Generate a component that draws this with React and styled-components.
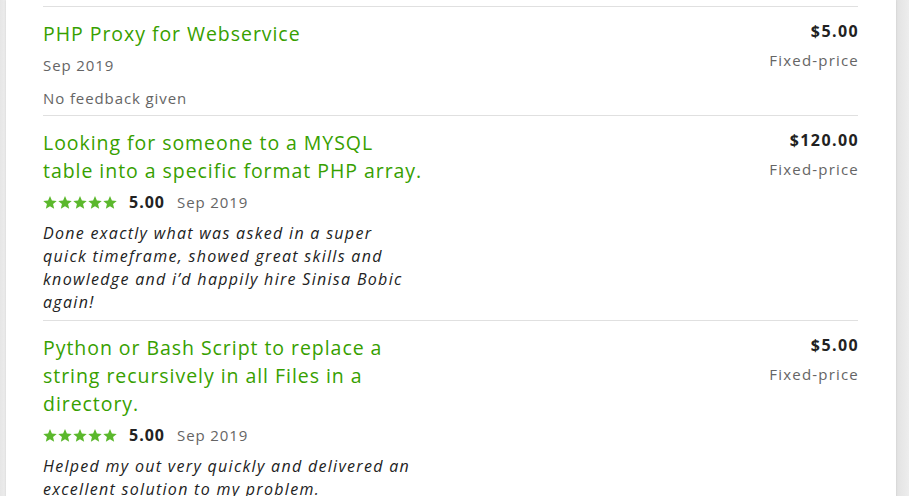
import React from 'react'
import styled, { createGlobalStyle } from 'styled-components'

const GlobalStyle = createGlobalStyle`
  html, body {
    margin: 0;
    padding: 0;
    background: #ececec;
    font-family: "Open Sans", "Liberation Sans", sans-serif;
  }
`

const Page = styled.div`
  display: flex;
  min-height: 496px;
  padding: 0 13px 0 6px;
  background: linear-gradient(90deg, #e6e6e6 0, #ededed 6px, #ededed calc(100% - 13px), #e2e2e2 calc(100% - 13px), #ededed 100%);
`

const Panel = styled.div`
  flex: 1;
  background: #fff;
  padding: 6px 38px 0 37px;
  box-shadow: 0 0 2px rgba(0, 0, 0, 0.12);
`

const Row = styled.div`
  display: flex;
  justify-content: space-between;
  border-top: 1px solid #e0e0e0;
  padding: 13px 0 6px;
`

const Left = styled.div`
  width: 420px;
`

const Title = styled.div`
  color: #37a000;
  font-size: 19.5px;
  font-weight: 500;
  line-height: 28px;
  letter-spacing: 0.95px;

  span {
    display: block;
    white-space: nowrap;
  }
`

const Meta = styled.div`
  display: flex;
  align-items: center;
  gap: 12px;
  margin-top: ${p => p.gap || 6}px;
  line-height: 22px;
  font-size: 15px;
  letter-spacing: 0.9px;
  color: #656565;
`

const Stars = styled.div`
  display: flex;
  gap: 1px;
`

const Score = styled.span`
  color: #222;
  font-weight: 700;
  font-size: 16px;
  letter-spacing: 1px;
`

const Review = styled.div`
  margin-top: 9px;
  font-size: 16px;
  font-style: italic;
  line-height: 23px;
  letter-spacing: 1.3px;
  color: #222;

  span {
    display: block;
    white-space: nowrap;
  }
`

const Right = styled.div`
  text-align: right;
`

const Price = styled.div`
  font-size: 16px;
  font-weight: 700;
  line-height: 22px;
  letter-spacing: 1.4px;
  margin-right: -1px;
  color: #222;
`

const Kind = styled.div`
  margin-top: 7px;
  font-size: 15px;
  line-height: 22px;
  letter-spacing: 1.2px;
  margin-right: -1px;
  color: #656565;
`

const Star = () => (
  <svg width="14" height="13" viewBox="2 2 20 19.3">
    <path
      fill="#5bb82c"
      d="M12 17.27L18.18 21l-1.64-7.03L22 9.24l-7.19-.61L12 2 9.19 8.63 2 9.24l5.46 4.730L5.82 21z"
    />
  </svg>
)

const jobs = [
  {
    title: ['PHP Proxy for Webservice'],
    date: 'Sep 2019',
    price: '$5.00',
  },
  {
    title: ['Looking for someone to a MYSQL', 'table into a specific format PHP array.'],
    score: '5.00',
    date: 'Sep 2019',
    review: [
      'Done exactly what was asked in a super',
      'quick timeframe, showed great skills and',
      'knowledge and i\u2019d happily hire Sinisa Bobic',
      'again!',
    ],
    price: '$120.00',
  },
  {
    title: ['Python or Bash Script to replace a', 'string recursively in all Files in a', 'directory.'],
    score: '5.00',
    date: 'Sep 2019',
    review: [
      'Helped my out very quickly and delivered an',
      'excellent solution to my problem.',
    ],
    price: '$5.00',
  },
]

const App = () => {
  return (
    <>
      <GlobalStyle />
      <Page>
        <Panel>
          {jobs.map((job, i) => (
            <Row key={i}>
              <Left>
                <Title>
                  {job.title.map(t => <span key={t}>{t}</span>)}
                </Title>
                {job.score ? (
                  <Meta>
                    <Stars>
                      {[0, 1, 2, 3, 4].map(n => <Star key={n} />)}
                    </Stars>
                    <Score>{job.score}</Score>
                    <span>{job.date}</span>
                  </Meta>
                ) : (
                  <>
                    <Meta>{job.date}</Meta>
                    <Meta gap={11}>No feedback given</Meta>
                  </>
                )}
                {job.review && (
                  <Review>
                    {job.review.map(r => <span key={r}>{r}</span>)}
                  </Review>
                )}
              </Left>
              <Right>
                <Price>{job.price}</Price>
                <Kind>Fixed-price</Kind>
              </Right>
            </Row>
          ))}
        </Panel>
      </Page>
    </>
  )
}

export default App
